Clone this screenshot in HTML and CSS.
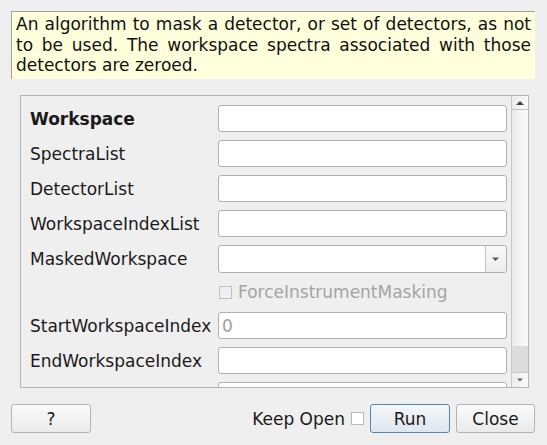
FILE: index.html
```html
<!DOCTYPE html>
<html>
<head>
<meta charset="utf-8">
<link rel="stylesheet" href="styles.css">
</head>
<body>
<div class="desc">An algorithm to mask a detector, or set of detectors, as not to be used. The workspace spectra associated with those detectors are zeroed.</div>
<div class="scroll">
  <div class="content">
    <div class="row"><span class="label bold">Workspace</span><div class="input"></div></div>
    <div class="row"><span class="label">SpectraList</span><div class="input"></div></div>
    <div class="row"><span class="label">DetectorList</span><div class="input"></div></div>
    <div class="row"><span class="label">WorkspaceIndexList</span><div class="input"></div></div>
    <div class="row"><span class="label">MaskedWorkspace</span><div class="input combo"><span class="combo-btn"><svg width="10" height="6" viewBox="0 0 10 6"><path d="M1 1.5 H8 L4.5 5 Z" fill="#555"/></svg></span></div></div>
    <div class="row check"><span class="label"></span><div class="check-row"><span class="cb disabled"></span><span class="cb-text">ForceInstrumentMasking</span></div></div>
    <div class="row"><span class="label">StartWorkspaceIndex</span><div class="input"><span class="ph">0</span></div></div>
    <div class="row"><span class="label">EndWorkspaceIndex</span><div class="input"></div></div>
    <div class="row"><span class="label"></span><div class="input"></div></div>
  </div>
  <div class="sbar">
    <div class="sbtn up"><svg width="10" height="6" viewBox="0 0 10 6"><path d="M1 5 H9 L5 1 Z" fill="#444"/></svg></div>
    <div class="track"><div class="handle"></div></div>
    <div class="sbtn down"><svg width="10" height="6" viewBox="0 0 10 6"><path d="M2 1.5 H8 L5 4.5 Z" fill="#666"/></svg></div>
  </div>
</div>
<div class="footer">
  <button class="btn help">?</button>
  <span class="spacer"></span>
  <span class="keep">Keep Open</span><span class="cb keep-cb"></span>
  <button class="btn run">Run</button>
  <button class="btn close">Close</button>
</div>
</body>
</html>
```
FILE: styles.css
```css
html, body {
  margin: 0;
  padding: 0;
}
body {
  background: #efefef;
  font-family: "DejaVu Sans", sans-serif;
  font-size: 17px;
  color: #1a1a1a;
  width: 547px;
  height: 445px;
  overflow: hidden;
}
.desc {
  box-sizing: border-box;
  margin: 11px 12px 0 11px;
  height: 68px;
  background: #ffffdc;
  border-top: 1px solid #a0a0a0;
  border-left: 1px solid #a0a0a0;
  padding: 2px 4px 0 4px;
  line-height: 20.5px;
  text-align: justify;
  color: #111;
}
.scroll {
  box-sizing: border-box;
  margin: 16px 0 0 20px;
  width: 509px;
  height: 293px;
  border: 1px solid #b4b4b4;
  display: flex;
  overflow: hidden;
}
.content {
  flex: 1;
  padding: 9px 4px 0 9px;
  display: flex;
  flex-direction: column;
  gap: 8px;
  overflow: hidden;
}
.row {
  display: flex;
  align-items: center;
  height: 27px;
  flex: none;
}
.row.check {
  height: 24px;
}
.label {
  width: 188px;
  flex: none;
  white-space: nowrap;
}
.bold {
  font-weight: bold;
}
.input {
  box-sizing: border-box;
  width: 290px;
  height: 27px;
  background: #fff;
  border: 1px solid #b0b0b0;
  border-radius: 3px;
  display: flex;
  align-items: center;
  position: relative;
}
.combo {
  height: 28px;
}
.combo-btn {
  position: absolute;
  right: 0;
  top: 0;
  bottom: 0;
  width: 20px;
  border-left: 1px solid #c4c4c4;
  background: linear-gradient(#fafafa, #ececec);
  border-radius: 0 3px 3px 0;
  display: flex;
  align-items: center;
  justify-content: center;
}
.ph {
  color: #a0a0a0;
  padding-left: 3px;
}
.check-row {
  display: flex;
  align-items: center;
  gap: 6px;
  padding-left: 1px;
}
.cb {
  box-sizing: border-box;
  display: inline-block;
  width: 13px;
  height: 13px;
  border: 1px solid #b8b8b8;
  background: #fff;
}
.cb.disabled {
  background: #f0f0f0;
  border-color: #c0c0c0;
}
.cb-text {
  color: #a4a4a4;
}
.sbar {
  width: 16px;
  flex: none;
  display: flex;
  flex-direction: column;
  border-left: 1px solid #c8c8c8;
  background: linear-gradient(90deg, #ececec, #fafafa);
}
.sbtn {
  height: 14px;
  flex: none;
  display: flex;
  align-items: center;
  justify-content: center;
}
.sbtn.up {
  border-bottom: 1px solid #c4c4c4;
  height: 13px;
}
.sbtn.down {
  height: 14px;
}
.track {
  flex: 1;
  display: flex;
  flex-direction: column;
  justify-content: flex-end;
}
.handle {
  height: 26px;
  background: #dcdcdc;
  border-bottom: 1px solid #c8c8c8;
}
.footer {
  display: flex;
  align-items: center;
  margin: 16px 12px 0 11px;
  height: 29px;
}
.btn {
  box-sizing: border-box;
  height: 29px;
  width: 80px;
  font-family: "DejaVu Sans", sans-serif;
  font-size: 17px;
  color: #1a1a1a;
  border: 1px solid #b4b4b4;
  border-radius: 3px;
  background: linear-gradient(#fbfbfb, #eaeaea);
  padding: 0;
}
.spacer {
  flex: 1;
}
.keep {
  margin-right: 6px;
}
.keep-cb {
  margin-right: 6px;
}
.run {
  border-color: #4f86b8;
  background: linear-gradient(#f4f7fa, #dfe6ee);
  margin-right: 6px;
}
.close {
  width: 79px;
}
```
